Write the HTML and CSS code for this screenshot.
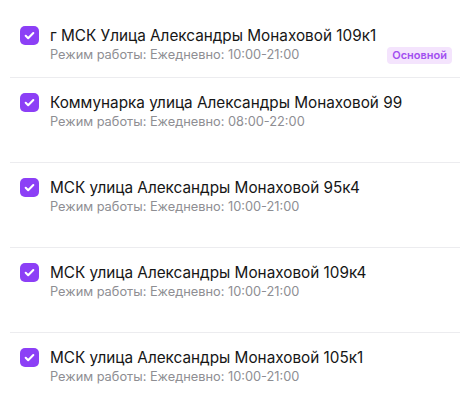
FILE: index.html
```html
<!DOCTYPE html>
<html lang="ru">
<head>
<meta charset="utf-8">
<link rel="stylesheet" href="styles.css">
</head>
<body>
<ul class="list">
  <li class="item item--first">
    <span class="check"><svg viewBox="0 0 20 20" width="19" height="19"><path d="M6 10.3l2.6 2.5L14 7.4" fill="none" stroke="#fff" stroke-width="2.2" stroke-linecap="round" stroke-linejoin="round"/></svg></span>
    <div class="body">
      <div class="title">г МСК Улица Александры Монаховой 109к1</div>
      <div class="sub-row">
        <div class="sub">Режим работы: Ежедневно: 10:00-21:00</div>
        <span class="badge">Основной</span>
      </div>
    </div>
  </li>
  <li class="item">
    <span class="check"><svg viewBox="0 0 20 20" width="19" height="19"><path d="M6 10.3l2.6 2.5L14 7.4" fill="none" stroke="#fff" stroke-width="2.2" stroke-linecap="round" stroke-linejoin="round"/></svg></span>
    <div class="body">
      <div class="title">Коммунарка улица Александры Монаховой 99</div>
      <div class="sub">Режим работы: Ежедневно: 08:00-22:00</div>
    </div>
  </li>
  <li class="item">
    <span class="check"><svg viewBox="0 0 20 20" width="19" height="19"><path d="M6 10.3l2.6 2.5L14 7.4" fill="none" stroke="#fff" stroke-width="2.2" stroke-linecap="round" stroke-linejoin="round"/></svg></span>
    <div class="body">
      <div class="title">МСК улица Александры Монаховой 95к4</div>
      <div class="sub">Режим работы: Ежедневно: 10:00-21:00</div>
    </div>
  </li>
  <li class="item">
    <span class="check"><svg viewBox="0 0 20 20" width="19" height="19"><path d="M6 10.3l2.6 2.5L14 7.4" fill="none" stroke="#fff" stroke-width="2.2" stroke-linecap="round" stroke-linejoin="round"/></svg></span>
    <div class="body">
      <div class="title">МСК улица Александры Монаховой 109к4</div>
      <div class="sub">Режим работы: Ежедневно: 10:00-21:00</div>
    </div>
  </li>
  <li class="item">
    <span class="check"><svg viewBox="0 0 20 20" width="19" height="19"><path d="M6 10.3l2.6 2.5L14 7.4" fill="none" stroke="#fff" stroke-width="2.2" stroke-linecap="round" stroke-linejoin="round"/></svg></span>
    <div class="body">
      <div class="title">МСК улица Александры Монаховой 105к1</div>
      <div class="sub">Режим работы: Ежедневно: 10:00-21:00</div>
    </div>
  </li>
</ul>
</body>
</html>
```
FILE: styles.css
```css
html, body {
  margin: 0;
  padding: 0;
  background: #fff;
}
body {
  font-family: Inter, "Noto Sans", sans-serif;
  color: #1a1a1a;
}
.list {
  list-style: none;
  margin: 0;
  padding: 11px 5px 0 10px;
}
.item {
  display: flex;
  align-items: flex-start;
  gap: 11px;
  padding: 15px 0 0 10px;
  box-sizing: content-box;
  border-top: 1px solid #ececef;
}
.item--first {
  border-top: none;
  height: 51px;
}
.item:not(.item--first) {
  height: 69px;
}
.check {
  flex: none;
  width: 19px;
  height: 19px;
  border-radius: 5px;
  background: #8c3ff6;
  display: flex;
}
.body {
  flex: 1;
  min-width: 0;
}
.title {
  font-size: 15.3px;
  line-height: 19px;
  color: #161616;
}
.sub-row {
  display: flex;
  align-items: center;
  justify-content: space-between;
  padding-right: 8px;
}
.sub {
  font-size: 12.8px;
  line-height: 18px;
  color: #8e8e93;
  margin-top: 1px;
}
.badge {
  font-size: 11px;
  font-weight: 600;
  line-height: 17px;
  padding: 0 5px;
  border-radius: 4px;
  background: #f4e4fd;
  color: #a24ff0;
  margin-top: 2px;
}
```
